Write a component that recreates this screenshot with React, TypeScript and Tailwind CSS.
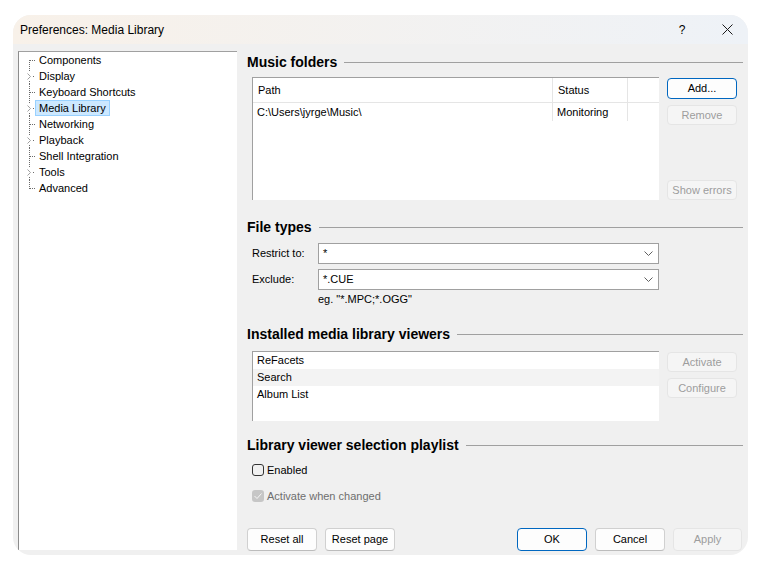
import React from "react";

const tree = [
  { label: "Components", exp: false },
  { label: "Display", exp: true },
  { label: "Keyboard Shortcuts", exp: false },
  { label: "Media Library", exp: true, selected: true },
  { label: "Networking", exp: false },
  { label: "Playback", exp: true },
  { label: "Shell Integration", exp: false },
  { label: "Tools", exp: true },
  { label: "Advanced", exp: false },
];

function TreeRow({
  label,
  exp,
  first,
  last,
  selected,
}: {
  label: string;
  exp: boolean;
  first: boolean;
  last: boolean;
  selected?: boolean;
}) {
  const dot = { stroke: "#6a6a6a", strokeDasharray: "1 1", shapeRendering: "crispEdges" as const };
  return (
    <div className="flex h-[16px] items-center">
      <svg width="16" height="16" className="shrink-0">
        {exp ? (
          <>
            <line x1="10.5" y1="0" x2="10.5" y2="4" {...dot} />
            <line x1="10.5" y1="13" x2="10.5" y2="16" {...dot} />
            <path d="M8.5 5.5 L11.5 8.5 L8.5 11.5" fill="none" stroke="#a0a0a0" strokeWidth="1" />
            <rect x="14" y="8" width="1" height="1" fill="#6a6a6a" />
          </>
        ) : (
          <>
            <line x1="10.5" y1={first ? 8 : 0} x2="10.5" y2={last ? 9 : 16} {...dot} />
            <line x1="11" y1="8.5" x2="16" y2="8.5" {...dot} />
          </>
        )}
      </svg>
      <span
        className={
          selected
            ? "h-[16px] px-[3px] leading-[14px] border border-[#99d1ff] bg-[#cce8ff]"
            : "h-[16px] px-[3px] leading-[14px] border border-transparent"
        }
      >
        {label}
      </span>
    </div>
  );
}

function Heading({ title }: { title: string }) {
  return (
    <div className="flex h-[20px] items-center">
      <span className="text-[14px] font-bold leading-[20px] text-black">{title}</span>
      <div className="ml-[7px] h-px flex-1 bg-[#a0a0a0]" />
    </div>
  );
}

function Btn({
  children,
  kind = "normal",
  className = "",
}: {
  children: React.ReactNode;
  kind?: "normal" | "default" | "disabled";
  className?: string;
}) {
  const look =
    kind === "default"
      ? "border-[#0067c0] bg-[#fdfdfd] text-black"
      : kind === "disabled"
      ? "border-[#e5e5e5] bg-[#f5f5f5] text-[#9d9d9d]"
      : "border-[#d0d0d0] border-b-[#bcbcbc] bg-[#fdfdfd] text-black";
  return (
    <div className={`flex items-center justify-center rounded-[4px] border text-[11px] ${look} ${className}`}>
      {children}
    </div>
  );
}

function Combo({ value }: { value: string }) {
  return (
    <div className="flex h-[21px] w-[341px] items-center justify-between border border-[#a0a0a0] bg-white pl-[4px] pr-[5px]">
      <span>{value}</span>
      <svg width="9" height="6" viewBox="0 0 9 6">
        <path d="M0.5 0.5 L4.5 4.5 L8.5 0.5" fill="none" stroke="#606060" strokeWidth="1" />
      </svg>
    </div>
  );
}

export default function App() {
  return (
    <div className="h-[576px] w-[764px] bg-white pl-[13px] pt-[15px] font-['Liberation_Sans',Arial,sans-serif] text-[11px] text-black">
      <div className="flex h-[540px] w-[735px] flex-col overflow-hidden rounded-[18px] bg-[#f0f0f0]">
        {/* title bar */}
        <div className="flex h-[29px] shrink-0 items-center bg-gradient-to-r from-[#f8f1e9] to-[#eef2f7] pl-[7px]">
          <span className="flex-1 text-[12px]">Preferences: Media Library</span>
          <span className="mr-[10px] w-[20px] text-center text-[12px]">?</span>
          <div className="flex w-[46px] items-center justify-center pl-[4px]">
            <svg width="11" height="11" viewBox="0 0 11 11">
              <path d="M0.5 0.5 L10.5 10.5 M10.5 0.5 L0.5 10.5" stroke="#1a1a1a" strokeWidth="1" />
            </svg>
          </div>
        </div>

        <div className="flex flex-1">
          {/* tree */}
          <div className="ml-[5px] mt-[7px] h-[499px] w-[219px] border-l border-t border-l-[#8c8c8c] border-t-[#a0a0a0] bg-white">
            {tree.map((t, i) => (
              <TreeRow
                key={t.label}
                label={t.label}
                exp={t.exp}
                selected={t.selected}
                first={i === 0}
                last={i === tree.length - 1}
              />
            ))}
          </div>

          {/* page */}
          <div className="ml-[10px] flex w-[496px] flex-col">
            <div className="mt-[8px]">
              <Heading title="Music folders" />
            </div>
            <div className="ml-[5px] mt-[5px] flex">
              <div className="h-[123px] w-[407px] border-l border-t border-[#a0a0a0] bg-white">
                <div className="flex h-[25px] border-b border-[#e5e5e5]">
                  <div className="flex w-[300px] items-center border-r border-[#e5e5e5] pl-[5px]">Path</div>
                  <div className="flex w-[75px] items-center border-r border-[#e5e5e5] pl-[5px]">Status</div>
                </div>
                <div className="flex h-[18px]">
                  <div className="flex w-[300px] items-center border-r border-[#e5e5e5] pl-[4px]">C:\Users\jyrge\Music\</div>
                  <div className="flex w-[75px] items-center border-r border-[#e5e5e5] pl-[4px]">Monitoring</div>
                </div>
              </div>
              <div className="ml-[8px] flex w-[70px] flex-col">
                <Btn kind="default" className="mt-[1px] h-[21px]">Add...</Btn>
                <Btn kind="disabled" className="mt-[6px] h-[20px]">Remove</Btn>
                <Btn kind="disabled" className="mt-[55px] h-[20px]">Show errors</Btn>
              </div>
            </div>

            <div className="mt-[17px]">
              <Heading title="File types" />
            </div>
            <div className="ml-[5px] mt-[6px] flex items-center">
              <span className="w-[66px]">Restrict to:</span>
              <Combo value="*" />
            </div>
            <div className="ml-[5px] mt-[5px] flex items-center">
              <span className="w-[66px]">Exclude:</span>
              <Combo value="*.CUE" />
            </div>
            <div className="ml-[71px] mt-[2px] h-[14px] leading-[14px]">eg. "*.MPC;*.OGG"</div>

            <div className="mt-[18px]">
              <Heading title="Installed media library viewers" />
            </div>
            <div className="ml-[5px] mt-[7px] flex">
              <div className="h-[70px] w-[407px] border-l border-t border-[#a0a0a0] bg-white">
                <div className="flex h-[17px] items-center pl-[4px]">ReFacets</div>
                <div className="flex h-[17px] items-center bg-[#f3f3f3] pl-[4px]">Search</div>
                <div className="flex h-[17px] items-center pl-[4px]">Album List</div>
              </div>
              <div className="ml-[8px] flex w-[70px] flex-col">
                <Btn kind="disabled" className="mt-[1px] h-[20px]">Activate</Btn>
                <Btn kind="disabled" className="mt-[6px] h-[20px]">Configure</Btn>
              </div>
            </div>

            <div className="mt-[14px]">
              <Heading title="Library viewer selection playlist" />
            </div>
            <div className="ml-[5px] mt-[8px] flex h-[14px] items-center gap-[3px]">
              <div className="h-[12px] w-[12px] rounded-[3px] border border-[#333]" />
              <span>Enabled</span>
            </div>
            <div className="ml-[5px] mt-[12px] flex h-[14px] items-center gap-[3px]">
              <div className="flex h-[12px] w-[12px] items-center justify-center rounded-[3px] bg-[#c6c6c6]">
                <svg width="8" height="6" viewBox="0 0 8 6">
                  <path d="M0.5 3 L3 5.5 L7.5 0.5" fill="none" stroke="#f5f5f5" strokeWidth="1" />
                </svg>
              </div>
              <span className="text-[#6e6e6e]">Activate when changed</span>
            </div>

            <div className="mt-[25px] flex justify-between pr-px">
              <div className="flex gap-[8px]">
                <Btn className="h-[23px] w-[70px]">Reset all</Btn>
                <Btn className="h-[23px] w-[70px]">Reset page</Btn>
              </div>
              <div className="flex gap-[8px]">
                <Btn kind="default" className="h-[23px] w-[70px]">OK</Btn>
                <Btn className="h-[23px] w-[70px]">Cancel</Btn>
                <Btn kind="disabled" className="h-[23px] w-[69px]">Apply</Btn>
              </div>
            </div>
          </div>
        </div>
      </div>
    </div>
  );
}
